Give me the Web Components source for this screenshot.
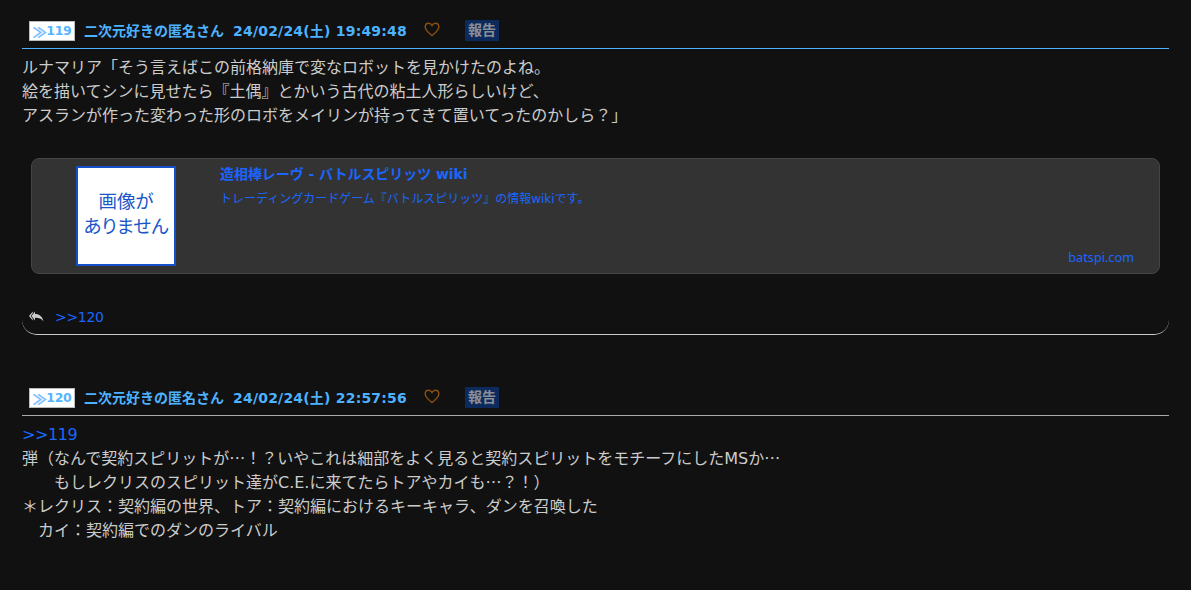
<!DOCTYPE html>
<html lang="ja">
<head>
<meta charset="utf-8">
<title>res</title>
<style>
  html, body { margin: 0; background: #111; }
  body { padding: 19px 22px 0; height: 590px; box-sizing: border-box; overflow: hidden; font-family: "DejaVu Sans", "Noto Sans CJK JP", sans-serif; }
  .jp { font-family: "Noto Sans CJK JP", sans-serif; line-height: 1; }
  .anchor { color: #1a66ff; letter-spacing: -0.4px; }
</style>
</head>
<body>
<res-item num="119" date="24/02/24(土) 19:49:48" accent>
  <div>ルナマリア「そう言えばこの前格納庫で変なロボットを見かけたのよね。</div>
  <div>絵を描いてシンに見せたら『土偶』とかいう古代の粘土人形らしいけど、</div>
  <div>アスランが作った変わった形のロボをメイリンが持ってきて置いてったのかしら？」</div>
  <link-card slot="card" title="造相棒レーヴ - バトルスピリッツ wiki" desc="トレーディングカードゲーム『バトルスピリッツ』の情報wikiです。" site="batspi.com"></link-card>
  <res-replies slot="replies">&gt;&gt;120</res-replies>
</res-item>
<res-item num="120" date="24/02/24(土) 22:57:56">
  <div class="anchor">&gt;&gt;119</div>
  <div>弾（なんで契約スピリットが<span class="jp">…</span>！？いやこれは細部をよく見ると契約スピリットをモチーフにしたMSか<span class="jp">…</span></div>
  <div>　　もしレクリスのスピリット達がC.E.に来てたらトアやカイも<span class="jp">…</span>？！）</div>
  <div>＊レクリス：契約編の世界、トア：契約編におけるキーキャラ、ダンを召喚した</div>
  <div>　カイ：契約編でのダンのライバル</div>
</res-item>
<script>
class ResItem extends HTMLElement {
  constructor() {
    super();
    this._shadowRoot = this.attachShadow({ mode: 'open' });
  }

  connectedCallback() {
    const num = this.getAttribute('num');
    const date = this.getAttribute('date');
    this._shadowRoot.innerHTML = `
      <style>
        :host { display: block; margin-bottom: 51px; }
        .head {
          display: flex;
          align-items: center;
          height: 24px;
          padding: 0 0 5px 7px;
          border-bottom: 1px solid #aaa;
          color: #4db2ff;
          font-size: 14px;
          font-weight: bold;
          white-space: nowrap;
        }
        :host([accent]) .head { border-bottom-color: #4db2ff; }
        .num {
          box-sizing: border-box;
          display: flex;
          align-items: center;
          justify-content: center;
          width: 46px;
          height: 20px;
          background: #fff;
          margin-right: 9px;
          border: 1px solid #bbb;
          font-size: 12.5px;
          letter-spacing: -0.4px;
          line-height: 16px;
          color: #55b4ff;
        }
        .num i { font-style: normal; font-family: "Noto Sans CJK JP", sans-serif; font-size: 14px; line-height: 14px; margin-bottom: 1px; color: #7cc0ff; -webkit-text-stroke: 0.4px #7cc0ff; }
        .name, .date { margin-bottom: 2px; }
        .date { margin-left: 9px; letter-spacing: 0.2px; }
        svg.heart { margin: 0 0 4px 17px; }
        .report {
          margin: 0 0 2px 25px;
          padding: 0 3px;
          height: 21px;
          line-height: 21px;
          background: #0d2a5c;
          color: #8a8f98;
          font-size: 14px;
        }
        .body {
          padding-top: 7px;
          color: #ccc;
          font-size: 16px;
          line-height: 24px;
        }
      </style>
      <div class="head">
        <span class="num"><i>≫</i>${num}</span>
        <span class="name">二次元好きの匿名さん</span>
        <span class="date">${date}</span>
        <svg class="heart" width="16" height="15" viewBox="0 0 16 15" fill="none" stroke="#8a4f10" stroke-width="1.4">
          <path d="M8 13.6C4.5 10.8 1.2 8.2 1.2 5 1.2 2.8 2.8 1.3 4.6 1.3 6 1.3 7.3 2.1 8 3.5 8.7 2.1 10 1.3 11.4 1.3 13.2 1.3 14.8 2.8 14.8 5 14.8 8.2 11.5 10.8 8 13.6Z"/>
        </svg>
        <span class="report">報告</span>
      </div>
      <div class="body"><slot></slot></div>
      <slot name="card"></slot>
      <slot name="replies"></slot>
    `;
  }
}

class LinkCard extends HTMLElement {
  constructor() {
    super();
    this._shadowRoot = this.attachShadow({ mode: 'open' });
  }

  connectedCallback() {
    this._shadowRoot.innerHTML = `
      <style>
        :host {
          display: flex;
          box-sizing: border-box;
          height: 116px;
          margin: 30px 9px 0;
          padding: 7px 25px 7px 44px;
          background: #333;
          border: 1px solid #444;
          border-radius: 8px;
          color: #1a66ff;
        }
        .thumb {
          box-sizing: border-box;
          flex: none;
          width: 100px;
          height: 100px;
          margin-right: 44px;
          padding-bottom: 4px;
          background: #fff;
          border: 2px solid #1450c8;
          color: #1a56c8;
          font-size: 18.5px;
          font-feature-settings: "palt";
          line-height: 25px;
          text-align: center;
          display: flex;
          align-items: center;
          justify-content: center;
        }
        .info { flex: 1; display: flex; flex-direction: column; margin-top: -1px; }
        .title { font-size: 14px; font-weight: bold; line-height: 18px; letter-spacing: -0.05px; }
        .desc { font-size: 12px; line-height: 18px; margin-top: 7px; }
        .site { margin-top: auto; text-align: right; font-family: "Noto Sans", sans-serif; font-size: 12.7px; line-height: 18px; }
      </style>
      <div class="thumb">画像が<br>ありません</div>
      <div class="info">
        <div class="title">${this.getAttribute('title')}</div>
        <div class="desc">${this.getAttribute('desc')}</div>
        <div class="site">${this.getAttribute('site')}</div>
      </div>
    `;
  }
}

class ResReplies extends HTMLElement {
  constructor() {
    super();
    this._shadowRoot = this.attachShadow({ mode: 'open' });
  }

  connectedCallback() {
    this._shadowRoot.innerHTML = `
      <style>
        :host {
          display: flex;
          align-items: center;
          box-sizing: border-box;
          height: 34px;
          margin-top: 27px;
          padding: 0 0 2px 7px;
          border-bottom: 1px solid #ccc;
          border-radius: 0 0 15px 15px;
          color: #1a66ff;
          font-size: 14px;
          letter-spacing: -0.3px;
        }
        svg { margin-right: 11px; }
      </style>
      <svg width="15" height="11" viewBox="0 0 15 11" fill="#ccc">
        <path d="M6 0.5V3C10.5 3 13.5 5.5 14.5 10.5 12.5 7.5 10 6.8 6 6.8V9.5L2.5 5Z"/>
        <path d="M3.8 0.5V2L1.8 5 3.8 8V9.5L0 5Z"/>
      </svg>
      <slot></slot>
    `;
  }
}

customElements.define('res-item', ResItem);
customElements.define('link-card', LinkCard);
customElements.define('res-replies', ResReplies);
</script>
</body>
</html>
